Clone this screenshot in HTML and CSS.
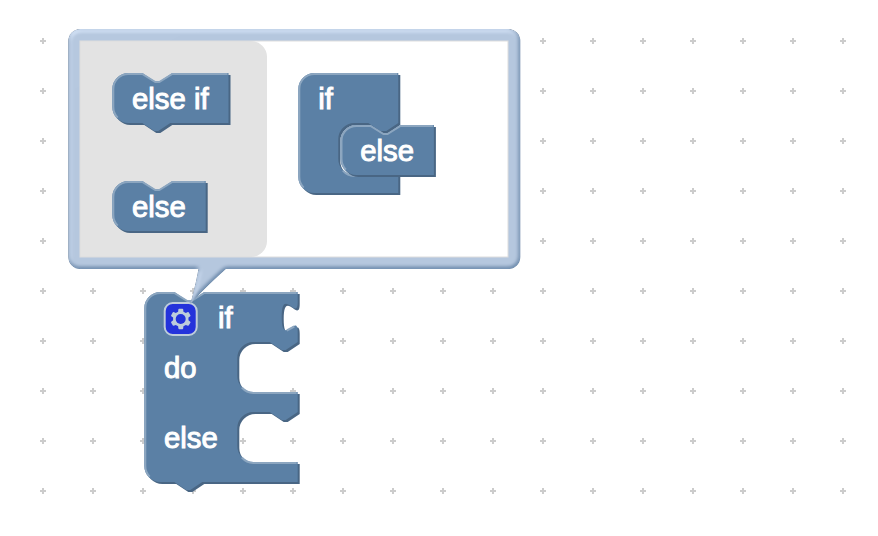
FILE: index.html
```html
<!DOCTYPE html>
<html lang="en">
<head>
<meta charset="utf-8">
<title>Block editor</title>
<link rel="stylesheet" href="styles.css">
</head>
<body>
<svg class="workspace" viewBox="0 0 878 536" width="878" height="536">
  <defs>
    <pattern id="grid" x="18" y="16" width="50" height="50" patternUnits="userSpaceOnUse">
      <path class="grid-mark" d="M22 25h6M25 22v6"/>
    </pattern>
    <filter id="emboss" x="-5%" y="-5%" width="110%" height="115%">
      <feGaussianBlur in="SourceAlpha" stdDeviation="1" result="blur"/>
      <feSpecularLighting in="blur" surfaceScale="0.5" specularConstant="0.5" specularExponent="10" lighting-color="white" result="spec">
        <fePointLight x="-5000" y="-10000" z="20000"/>
      </feSpecularLighting>
      <feComposite in="spec" in2="SourceAlpha" operator="in" result="spec"/>
      <feComposite in="SourceGraphic" in2="spec" operator="arithmetic" k1="0" k2="1" k3="1" k4="0"/>
    </filter>
    <path id="else-if-shape" d="M0 16A16 16 0 0 1 16 0H30l12 8h6l12-8H116.200V50H58l-12 8h-4l-12-8H16A16 16 0 0 1 0 34z"/>
    <path id="else-shape" d="M0 16A16 16 0 0 1 16 0H30l12 8h6l12-8H93.400V50H16A16 16 0 0 1 0 34z"/>
    <path id="if-shape" d="M0 16A16 16 0 0 1 16 0H100V50l-12 8h-6l-12-8H56a16 16 0 0 0-16 16V86a16 16 0 0 0 16 16H100V120H16A16 16 0 0 1 0 104z"/>
    <path id="main-shape" d="M0 16A16 16 0 0 1 16 0H30l12 8h6l12-8H153.400V10c0 20-16-16-16 15s16-5 16 15V50l-12 8h-4l-12-8H109a16 16 0 0 0-16 16V84a16 16 0 0 0 16 16H153.400V120l-12 8h-4l-12-8H109a16 16 0 0 0-16 16V154a16 16 0 0 0 16 16H153.400V190H58l-12 8h-4l-12-8H16A16 16 0 0 1 0 174z"/>
  </defs>

  <rect width="878" height="536" fill="url(#grid)"/>

  <!-- if / do / else block -->
  <g transform="translate(144.300 292)">
    <use href="#main-shape" class="shade" x="2" y="2"/>
    <use href="#main-shape" class="block"/>
    <path class="light" d="M5.400 184.600A15 15 0 0 1 1 174V16A15 15 0 0 1 16 1H30l13 8h4l13-8H152.400M142.500 38.500l7.500-4M97.500 95.500A17 17 0 0 0 109 101H152.400M97.500 165.500A17 17 0 0 0 109 171H152.400"/>
    <text class="label" x="73.700" y="36">if</text>
    <text class="label" x="19.700" y="86.300">do</text>
    <text class="label" x="19.700" y="156">else</text>
    <g class="gear" transform="translate(20.400 11) scale(2)">
      <rect class="gear-box" width="16" height="16" rx="4"/>
      <path class="gear-symbol" d="m4.203,7.296 0,1.368 -0.92,0.677 -0.11,0.41 0.9,1.559 0.41,0.11 1.043,-0.457 1.187,0.683 0.127,1.134 0.3,0.3 1.8,0 0.3,-0.299 0.127,-1.138 1.185,-0.682 1.046,0.458 0.409,-0.11 0.9,-1.559 -0.11,-0.41 -0.92,-0.677 0,-1.366 0.92,-0.677 0.11,-0.41 -0.9,-1.559 -0.409,-0.109 -1.046,0.458 -1.185,-0.682 -0.127,-1.138 -0.3,-0.299 -1.8,0 -0.3,0.3 -0.126,1.135 -1.187,0.682 -1.043,-0.457 -0.41,0.11 -0.899,1.559 0.108,0.409z"/>
      <circle class="gear-hole" cx="8" cy="8" r="2.5"/>
    </g>
  </g>

  <!-- mutator bubble -->
  <g transform="scale(2)">
    <g class="block" filter="url(#emboss)">
      <path d="M100 130Q98.500 140 95.200 152Q102 144 118 130z"/>
      <rect x="34.150" y="14.500" width="226" height="120" rx="6"/>
    </g>
  </g>
  <rect class="panel" x="80" y="41" width="428" height="216"/>
  <path class="flyout" d="M80 41H251a16 16 0 0 1 16 16V241a16 16 0 0 1-16 16H80z"/>
  <rect class="panel-edge" x="80" y="41" width="428" height="216"/>

  <g transform="translate(112.300 73)">
    <use href="#else-if-shape" class="shade" x="2" y="2"/>
    <use href="#else-if-shape" class="block"/>
    <path class="light" d="M5.400 44.600A15 15 0 0 1 1 34V16A15 15 0 0 1 16 1H30l13 8h4l13-8H115.200"/>
    <text class="label" x="19.700" y="36">else if</text>
  </g>
  <g transform="translate(112.300 181)">
    <use href="#else-shape" class="shade" x="2" y="2"/>
    <use href="#else-shape" class="block"/>
    <path class="light" d="M5.400 44.600A15 15 0 0 1 1 34V16A15 15 0 0 1 16 1H30l13 8h4l13-8H92.400"/>
    <text class="label" x="19.700" y="36">else</text>
  </g>
  <g transform="translate(298.300 73)">
    <use href="#if-shape" class="shade" x="2" y="2"/>
    <use href="#if-shape" class="block"/>
    <path class="light" d="M5.400 114.600A15 15 0 0 1 1 104V16A15 15 0 0 1 16 1H99M44.500 97.500A17 17 0 0 0 56 103H99"/>
    <text class="label" x="19.900" y="36">if</text>
  </g>
  <g transform="translate(340.500 125)">
    <use href="#else-shape" class="shade" x="2" y="2"/>
    <use href="#else-shape" class="block"/>
    <path class="light" d="M5.400 44.600A15 15 0 0 1 1 34V16A15 15 0 0 1 16 1H30l13 8h4l13-8H92.400"/>
    <text class="label" x="19.700" y="36">else</text>
  </g>
</svg>
</body>
</html>
```

FILE: styles.css
```css
body {
  margin: 0;
  background: #fff;
}

.workspace {
  display: block;
}

.grid-mark {
  stroke: #ccc;
  stroke-width: 2;
}

.block {
  fill: #5b80a5;
}

.shade {
  fill: #496684;
}

.light {
  fill: none;
  stroke: #8ca6c0;
  stroke-width: 2;
}

.label {
  fill: #fff;
  stroke: #fff;
  stroke-width: 1;
  font-family: "Liberation Sans", Arial, sans-serif;
  font-size: 29.33px;
}

.gear {
  opacity: 0.6;
}

.gear-box {
  fill: #00f;
  stroke: #fff;
  stroke-width: 1;
}

.gear-symbol {
  fill: #fff;
}

.gear-hole {
  fill: #00f;
}

.panel {
  fill: #fff;
}

.panel-edge {
  fill: none;
  stroke: #ddd;
  stroke-width: 1;
}

.flyout {
  fill: #e3e3e3;
}
```
